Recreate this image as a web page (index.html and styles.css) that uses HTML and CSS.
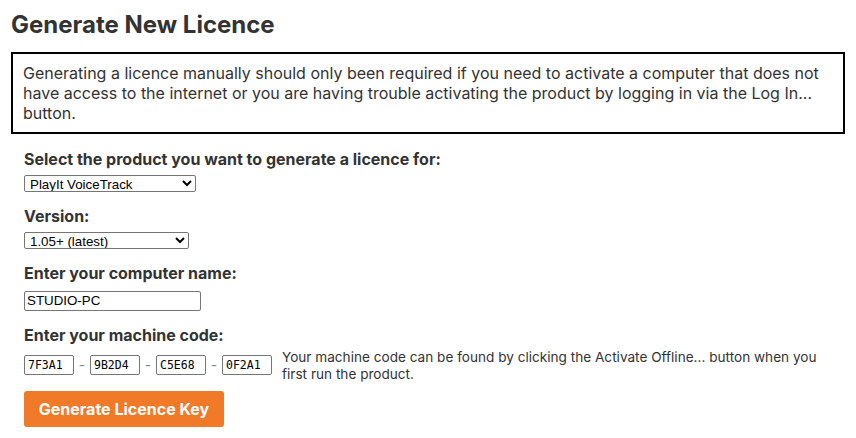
FILE: index.html
```html
<!DOCTYPE html>
<html lang="en">
<head>
    <meta charset="UTF-8">
    <meta name="viewport" content="width=device-width, initial-scale=1.0">
    <title>Generate New Licence</title>
    <link rel="stylesheet" href="styles.css">
</head>
<body>
    <div class="page">
        <h1>Generate New Licence</h1>

        <div class="notice">
            Generating a licence manually should only been required if you need to activate a computer that does not have access to the internet or you are having trouble activating the product by logging in via the Log In... button.
        </div>

        <form class="licence-form" onsubmit="return false;">
            <div class="field">
                <label for="product">Select the product you want to generate a licence for:</label>
                <select id="product" class="product-select">
                    <option>PlayIt VoiceTrack</option>
                    <option>PlayIt Live</option>
                    <option>PlayIt Recorder</option>
                </select>
            </div>

            <div class="field">
                <label for="version">Version:</label>
                <select id="version" class="version-select">
                    <option>1.05+ (latest)</option>
                    <option>1.04</option>
                    <option>1.03</option>
                </select>
            </div>

            <div class="field">
                <label for="computer">Enter your computer name:</label>
                <input type="text" id="computer" class="name-input" value="STUDIO-PC">
            </div>

            <div class="field code-field">
                <label for="code1">Enter your machine code:</label>
                <div class="code-row">
                    <input type="text" id="code1" class="code-input" value="7F3A1" maxlength="5">
                    <span class="dash">-</span>
                    <input type="text" class="code-input" value="9B2D4" maxlength="5">
                    <span class="dash">-</span>
                    <input type="text" class="code-input" value="C5E68" maxlength="5">
                    <span class="dash">-</span>
                    <input type="text" class="code-input" value="0F2A1" maxlength="5">
                    <p class="hint">Your machine code can be found by clicking the Activate Offline... button when you first run the product.</p>
                </div>
            </div>

            <button type="submit" class="generate-button">Generate Licence Key</button>
        </form>
    </div>
</body>
</html>
```

FILE: styles.css
```css
/* styles.css */
body {
    margin: 0;
    font-family: 'Inter', 'Liberation Sans', sans-serif;
    color: #333;
    background: #fff;
}

.page {
    padding: 11px 11px 0 11px;
}

h1 {
    font-size: 24px;
    line-height: 28px;
    margin: 0 0 13px 0;
    color: #333;
}

.notice {
    border: 2px solid #000;
    padding: 9px 10px;
    font-size: 16px;
    line-height: 20px;
    color: #333;
}

.licence-form {
    padding: 0 13px;
    margin-top: 15px;
}

.field {
    margin-bottom: 14px;
}

.field label {
    display: block;
    font-weight: bold;
    font-size: 16px;
    line-height: 20px;
    margin-bottom: 6px;
    color: #333;
}

select,
.name-input {
    font-family: 'Liberation Sans', Arial, sans-serif;
    font-size: 13.33px;
    color: #000;
    box-sizing: border-box;
}

select {
    display: block;
    height: 17px;
    padding: 0 0 0 1px;
    border: 1px solid #767676;
    border-radius: 2px;
    background-color: #fff;
}

.product-select {
    width: 172px;
}

.version-select {
    width: 165px;
}

.name-input {
    width: 177px;
    height: 20px;
    padding: 1px 2px;
    border: 1px solid #767676;
    border-radius: 2px;
}

.code-field {
    margin-bottom: 8px;
}

.code-row {
    display: flex;
    align-items: flex-start;
}

.code-input {
    font-family: 'DejaVu Sans Mono', 'Liberation Mono', monospace;
    font-size: 11.5px;
    color: #000;
    box-sizing: border-box;
    width: 50px;
    height: 20px;
    margin-top: 4px;
    padding: 1px 3px;
    border: 1px solid #767676;
    border-radius: 2px;
}

.dash {
    width: 16px;
    margin-top: 4px;
    text-align: center;
    font-size: 14px;
    line-height: 20px;
    color: #888;
}

.hint {
    margin: -2px 0 0 10px;
    font-size: 13.6px;
    line-height: 17px;
    color: #333;
    max-width: 540px;
}

.generate-button {
    display: block;
    font-family: 'Inter', 'Liberation Sans', sans-serif;
    font-size: 16px;
    font-weight: bold;
    color: #fff;
    background-color: #f07a28;
    border: none;
    border-radius: 3px;
    width: 200px;
    height: 36px;
    cursor: pointer;
}

.generate-button:hover {
    background-color: #d9681c;
}
```
